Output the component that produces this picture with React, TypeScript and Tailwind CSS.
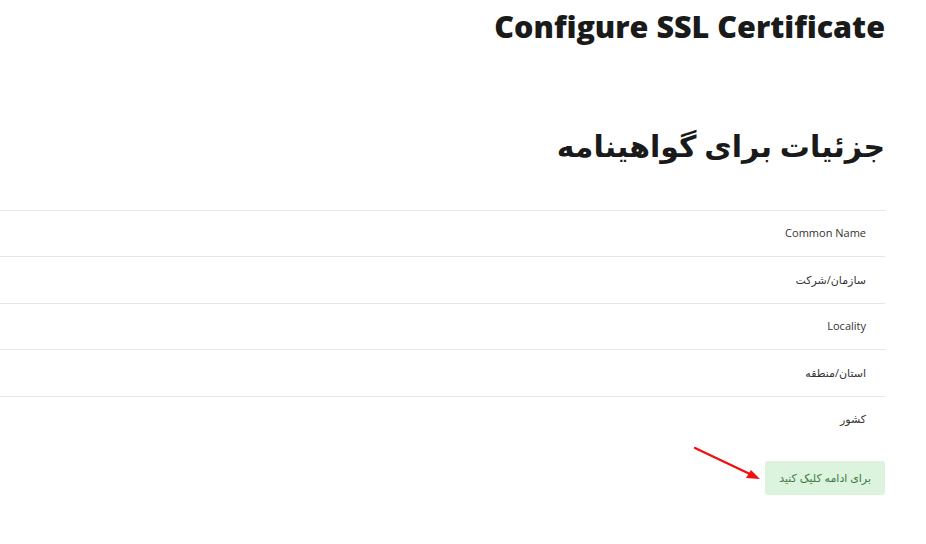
export default function App() {
  const fields = ["Common Name", "سازمان/شرکت", "Locality", "استان/منطقه", "کشور"];

  return (
    <div
      dir="rtl"
      className="min-h-screen bg-white pr-[41px] text-[#212529]"
      style={{ fontFamily: '"Open Sans", "DejaVu Sans", sans-serif' }}
    >
      <h1 className="pt-[6px] text-[30.5px] font-extrabold leading-[40px] text-[#1a1a1a]">
        Configure SSL Certificate
      </h1>

      <h2 className="mt-[76px] text-[30px] font-bold leading-[48px] text-[#1a1a1a]">
        جزئیات برای گواهینامه
      </h2>

      <div className="mt-[40px]">
        {fields.map((f) => (
          <div
            key={f}
            className="flex h-[46.4px] items-center border-t border-[#e6e6e6] pr-[19px] text-[11px] text-[#333]"
          >
            {f}
          </div>
        ))}
      </div>

      <div className="relative mt-[19px] flex">
        <button className="rounded-[3px] bg-[#dcf3dd] px-[14px] py-[9px] text-[11px] text-[#3c7a44]">
          برای ادامه کلیک کنید
        </button>
        <svg
          className="absolute left-[690px] top-[-16px]"
          width="76"
          height="40"
          viewBox="0 0 76 40"
        >
          <line x1="5" y1="3" x2="62" y2="30" stroke="#f01010" strokeWidth="2.4" strokeLinecap="round" />
          <polygon points="70,34 56,33 61,25" fill="#f01010" />
        </svg>
      </div>
    </div>
  );
}
